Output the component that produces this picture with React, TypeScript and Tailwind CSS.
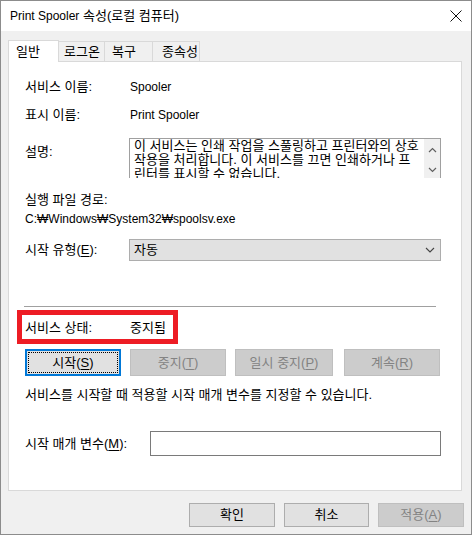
import type { ReactNode } from 'react'

const TABS = [
  { label: '일반', width: 'w-[51px]', pad: 'pl-[7px]' },
  { label: '로그온', width: 'w-[46px]', pad: 'pl-[5px]' },
  { label: '복구', width: 'w-[48px]', pad: 'pl-[7px]' },
  { label: '종속성', width: 'w-[47px]', pad: 'pl-[9px]' },
]

function Key({ children }: { children: ReactNode }) {
  return <span className="underline underline-offset-2">{children}</span>
}

// latin-only runs are a touch smaller than the hangul, like Malgun Gothic
function Latin({ children }: { children: ReactNode }) {
  return <span className="text-[12px]">{children}</span>
}

function Chevron({ dir }: { dir: 'up' | 'down' }) {
  return (
    <svg width="9" height="6" viewBox="0 0 9 6" fill="none" className="block">
      <path
        d={dir === 'up' ? 'M1 5 L4.5 1.5 L8 5' : 'M1 1 L4.5 4.5 L8 1'}
        stroke="#606060"
        strokeWidth="1.2"
      />
    </svg>
  )
}

function DisabledButton({ width, children, className = '' }: { width: string; children: ReactNode; className?: string }) {
  return (
    <div
      className={`${width} ${className} flex h-full items-center justify-center border border-[#bfbfbf] bg-[#cccccc] text-[#838383]`}
    >
      {children}
    </div>
  )
}

export default function App() {
  return (
    <div className="flex h-[535px] w-[472px] flex-col border border-[#8c8c8c] bg-[#f0f0f0] font-['Liberation_Sans','Noto_Sans_CJK_KR',sans-serif] text-[13px] leading-[16px] text-black">
      {/* title bar */}
      <div className="flex h-[30px] shrink-0 items-center justify-between bg-white pl-[9px] pr-[9px]">
        <span className="pb-px">
          <Latin>Print Spooler</Latin> 속성(로컬 컴퓨터)
        </span>
        <svg width="12" height="12" viewBox="0 0 12 12" className="mb-px">
          <path d="M0.5 0.5 L11.5 11.5 M11.5 0.5 L0.5 11.5" stroke="#111" strokeWidth="1" />
        </svg>
      </div>

      <div className="flex flex-1 flex-col pl-[7px] pr-[7px] pt-[9px]">
        {/* tabs */}
        <div className="relative z-10 flex h-[21px] items-end">
          {TABS.map((t, i) =>
            i === 0 ? (
              <div
                key={t.label}
                className={`${t.width} ${t.pad} -mb-px flex h-[22px] items-center border border-b-0 border-[#d9d9d9] bg-white`}
              >
                {t.label}
              </div>
            ) : (
              <div
                key={t.label}
                className={`${t.width} ${t.pad} flex h-[20px] items-center border-r border-t border-[#d9d9d9] pt-px`}
              >
                {t.label}
              </div>
            ),
          )}
        </div>

        {/* tab panel */}
        <div className="flex h-[430px] w-[454px] flex-col border border-[#d9d9d9] bg-white pl-[16px]">
          <div className="mt-[17px] flex h-[16px] items-center">
            <span className="w-[105px]">서비스 이름:</span>
            <Latin>Spooler</Latin>
          </div>
          <div className="mt-[12px] flex h-[16px] items-center">
            <span className="w-[105px]">표시 이름:</span>
            <Latin>Print Spooler</Latin>
          </div>

          <div className="mt-[15px] flex h-[40px] items-start">
            <span className="mt-[6px] w-[104px]">설명:</span>
            <div className="flex h-[40px] w-[312px] border-x border-t border-[#a0a0a0]">
              <div className="flex-1 overflow-hidden pl-[4px] leading-[14px]">
                <span className="block whitespace-nowrap">이 서비스는 인쇄 작업을 스풀링하고 프린터와의 상호</span>
                <span className="block whitespace-nowrap">작용을 처리합니다. 이 서비스를 끄면 인쇄하거나 프</span>
                <span className="block whitespace-nowrap">린터를 표시할 수 없습니다.</span>
              </div>
              <div className="flex w-[16px] shrink-0 flex-col items-center bg-[#f0f0f0] pt-[8px]">
                <Chevron dir="up" />
                <div className="mt-[14px]">
                  <Chevron dir="down" />
                </div>
              </div>
            </div>
          </div>

          <div className="mt-[14px] flex h-[16px] items-center">실행 파일 경로:</div>
          <div className="mt-[3px] flex h-[16px] items-center">
            <Latin>C:₩Windows₩System32₩spoolsv.exe</Latin>
          </div>

          <div className="mt-[12px] flex h-[22px] items-center">
            <span className="w-[104px]">
              시작 유형(<Key>E</Key>):
            </span>
            <div className="flex h-[22px] w-[312px] items-center justify-between border border-[#adadad] bg-[#e1e1e1] pl-[4px] pr-[5px]">
              <span>자동</span>
              <svg width="10" height="6" viewBox="0 0 10 6" fill="none">
                <path d="M1 1 L5 5 L9 1" stroke="#444" strokeWidth="1.1" />
              </svg>
            </div>
          </div>

          <div className="-ml-px mt-[45px] h-px w-[412px] bg-[#a0a0a0]" />

          <div className="relative mt-[13px] flex h-[16px] items-center">
            <span className="w-[105px]">서비스 상태:</span>
            <span>중지됨</span>
            {/* red highlight annotation */}
            <div className="absolute left-[-8px] top-[-10px] h-[34px] w-[161px] border-[5px] border-[#ed1c24]" />
          </div>

          <div className="mt-[13px] flex h-[27px] items-stretch">
            <div className="relative flex h-full w-[96px] items-center justify-center border-2 border-[#0078d7] bg-[#e1e1e1]">
              <span>
                시작(<Key>S</Key>)
              </span>
              <div className="absolute inset-[1px] border border-dotted border-black" />
            </div>
            <DisabledButton width="w-[96px]" className="ml-[9px]">
              중지(<Key>T</Key>)
            </DisabledButton>
            <DisabledButton width="w-[98px]" className="ml-[9px]">
              일시 중지(<Key>P</Key>)
            </DisabledButton>
            <DisabledButton width="w-[96px]" className="ml-[11px]">
              계속(<Key>R</Key>)
            </DisabledButton>
          </div>

          <div className="mt-[11px] flex h-[16px] items-center">
            서비스를 시작할 때 적용할 시작 매개 변수를 지정할 수 있습니다.
          </div>

          <div className="mt-[28px] flex h-[25px] items-center">
            <span className="w-[125px]">
              시작 매개 변수(<Key>M</Key>):
            </span>
            <div className="h-[25px] w-[291px] border border-[#7a7a7a] bg-white" />
          </div>
        </div>

        {/* dialog buttons */}
        <div className="mt-[12px] flex h-[24px] justify-end">
          <div className="flex w-[86px] items-center justify-center border border-[#adadad] bg-[#e1e1e1]">확인</div>
          <div className="ml-[9px] flex w-[85px] items-center justify-center border border-[#adadad] bg-[#e1e1e1]">
            취소
          </div>
          <DisabledButton width="w-[86px]" className="ml-[9px]">
            적용(<Key>A</Key>)
          </DisabledButton>
        </div>
      </div>
    </div>
  )
}
